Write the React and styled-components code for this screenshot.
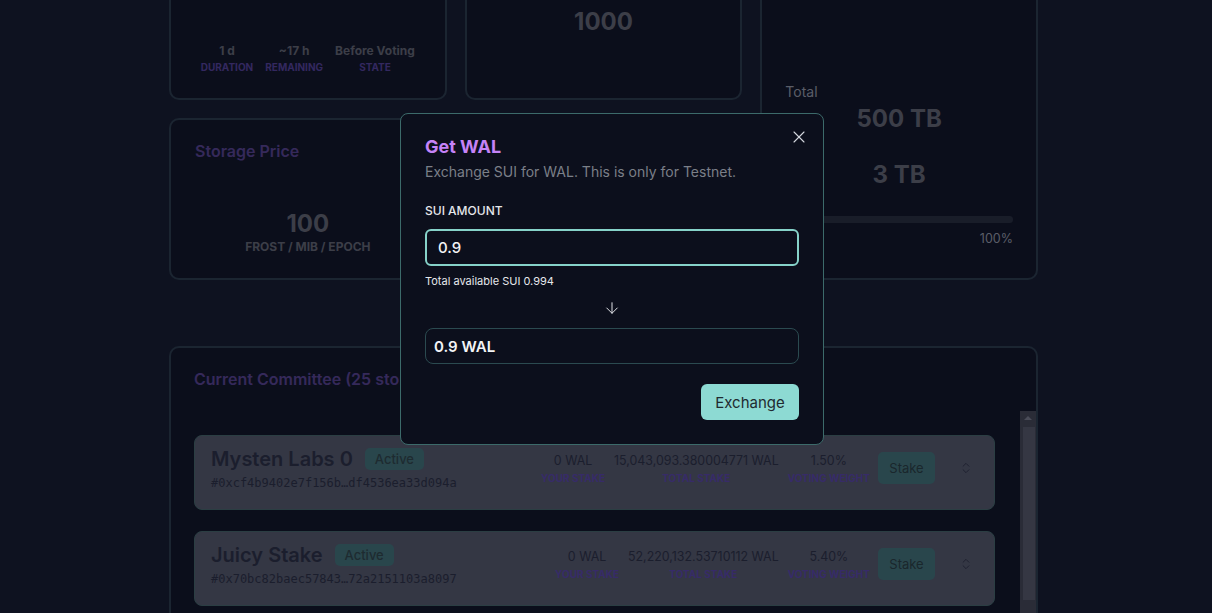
import React from 'react'
import styled, { createGlobalStyle } from 'styled-components'
import { X, ArrowDown, ChevronsUpDown } from 'lucide-react'

const GlobalStyle = createGlobalStyle`
  * { box-sizing: border-box; }
  body {
    margin: 0;
    background: #151b2e;
    font-family: Inter, "Noto Sans", sans-serif;
    overflow: hidden;
  }
`

const nodes = [
  {
    name: 'Mysten Labs 0',
    address: '#0xcf4b9402e7f156b…df4536ea33d094a',
    yourStake: '0 WAL',
    totalStake: '15,043,093.380004771 WAL',
    weight: '1.50%',
  },
  {
    name: 'Juicy Stake',
    address: '#0x70bc82baec57843…72a2151103a8097',
    yourStake: '0 WAL',
    totalStake: '52,220,132.53710112 WAL',
    weight: '5.40%',
  },
]

const App = () => {
  return (
    <>
      <GlobalStyle />
      <Page>
        <Content>
          <Grid>
            <Card $justify="flex-end">
              <EpochStats>
                <Stat>
                  <StatValue>1 d</StatValue>
                  <StatLabel>Duration</StatLabel>
                </Stat>
                <Stat>
                  <StatValue>~17 h</StatValue>
                  <StatLabel>Remaining</StatLabel>
                </Stat>
                <Stat>
                  <StatValue>Before Voting</StatValue>
                  <StatLabel>State</StatLabel>
                </Stat>
              </EpochStats>
            </Card>
            <Card $justify="center" $top="48px">
              <BigNumber>1000</BigNumber>
            </Card>
            <CapacityCard>
              <CapLabel>Total</CapLabel>
              <CapValue>500 TB</CapValue>
              <CapLabel $gap>Used</CapLabel>
              <CapValue>3 TB</CapValue>
              <Track>
                <Fill style={{ width: `${(3 / 500) * 100}%` }} />
              </Track>
              <Percent>100%</Percent>
            </CapacityCard>
            <Card $top="22px">
              <CardTitle>Storage Price</CardTitle>
              <Price>
                <BigNumber>100</BigNumber>
                <PriceUnit>FROST / MiB / EPOCH</PriceUnit>
              </Price>
            </Card>
            <Card />
          </Grid>

          <Committee>
            <CardTitle>Current Committee (25 storage nodes)</CardTitle>
            <ListFrame>
              <NodeList>
                {nodes.map((node) => (
                  <NodeRow key={node.address}>
                    <NodeInfo>
                      <NameLine>
                        <NodeName>{node.name}</NodeName>
                        <Badge>Active</Badge>
                      </NameLine>
                      <Address>{node.address}</Address>
                    </NodeInfo>
                    <NodeSide>
                      <NodeStats>
                        <Stat>
                          <RowValue>{node.yourStake}</RowValue>
                          <RowLabel>Your Stake</RowLabel>
                        </Stat>
                        <Stat>
                          <RowValue>{node.totalStake}</RowValue>
                          <RowLabel>Total Stake</RowLabel>
                        </Stat>
                        <Stat>
                          <RowValue>{node.weight}</RowValue>
                          <RowLabel>Voting Weight</RowLabel>
                        </Stat>
                      </NodeStats>
                      <StakeButton>Stake</StakeButton>
                      <Toggle>
                        <ChevronsUpDown size={14} strokeWidth={1.5} />
                      </Toggle>
                    </NodeSide>
                  </NodeRow>
                ))}
              </NodeList>
              <ScrollTrack>
                <ScrollButton />
                <ScrollThumb />
              </ScrollTrack>
            </ListFrame>
          </Committee>
        </Content>

        <Overlay>
          <Dialog>
            <Close>
              <X size={20} strokeWidth={1.3} />
            </Close>
            <DialogTitle>Get WAL</DialogTitle>
            <DialogText>Exchange SUI for WAL. This is only for Testnet.</DialogText>
            <FieldLabel>SUI AMOUNT</FieldLabel>
            <AmountInput defaultValue="0.9" />
            <Helper>Total available SUI 0.994</Helper>
            <ArrowRow>
              <ArrowDown size={18} strokeWidth={1.3} />
            </ArrowRow>
            <Output>0.9 WAL</Output>
            <Actions>
              <ExchangeButton>Exchange</ExchangeButton>
            </Actions>
          </Dialog>
        </Overlay>
      </Page>
    </>
  )
}

export default App

const Page = styled.div`
  height: 613px;
  overflow: hidden;
`

const Content = styled.div`
  width: 869px;
  margin-left: 169px;
`

const Grid = styled.div`
  display: grid;
  grid-template-columns: repeat(3, 1fr);
  grid-template-rows: 180px 162px;
  gap: 18px;
  margin-top: -80px;
`

const Card = styled.div`
  display: flex;
  flex-direction: column;
  justify-content: ${(p) => p.$justify || 'flex-start'};
  padding: ${(p) => p.$top || '24px'} 24px 24px;
  background: #111528;
  border: 2px solid #283547;
  border-radius: 10px;
`

const EpochStats = styled.div`
  display: flex;
  justify-content: center;
  gap: 12px;
`

const Stat = styled.div`
  display: flex;
  flex-direction: column;
  align-items: center;
  white-space: nowrap;
`

const StatValue = styled.div`
  font-size: 12px;
  font-weight: 700;
  line-height: 18px;
  color: #575a67;
`

const StatLabel = styled.div`
  font-size: 10px;
  font-weight: 700;
  line-height: 14px;
  text-transform: uppercase;
  color: #4a3a88;
`

const BigNumber = styled.div`
  font-size: 24px;
  font-weight: 700;
  line-height: 30px;
  color: #575a67;
  text-align: center;
`

const CapacityCard = styled(Card)`
  grid-row: span 2;
  justify-content: flex-end;
  padding: 24px 23px 31px;
`

const CapLabel = styled.div`
  font-size: 14px;
  line-height: 20px;
  color: #818595;
  margin-top: ${(p) => (p.$gap ? '4px' : '0')};
`

const CapValue = styled(BigNumber)`
  margin-top: 2px;
`

const Track = styled.div`
  height: 7px;
  margin-top: 26px;
  border-radius: 4px;
  background: #252a3b;
  overflow: hidden;
`

const Fill = styled.div`
  height: 100%;
  background: #3f6a72;
`

const Percent = styled.div`
  margin-top: 8px;
  font-size: 12.5px;
  line-height: 16px;
  text-align: right;
  color: #818595;
`

const CardTitle = styled.div`
  font-size: 16px;
  font-weight: 600;
  line-height: 18px;
  color: #4d3c82;
  white-space: nowrap;
`

const Price = styled.div`
  margin-top: auto;
  margin-bottom: -1px;
`

const PriceUnit = styled.div`
  font-size: 12px;
  font-weight: 700;
  line-height: 16px;
  text-align: center;
  text-transform: uppercase;
  color: #575a67;
`

const Committee = styled.div`
  margin-top: 66px;
  padding-top: 21px;
  background: #111528;
  border: 2px solid #283547;
  border-radius: 10px;

  ${CardTitle} {
    padding: 0 23px;
    line-height: 20px;
    margin-bottom: 22px;
  }
`

const ListFrame = styled.div`
  display: flex;
  height: 240px;
`

const NodeList = styled.div`
  flex: 1;
  display: flex;
  flex-direction: column;
  gap: 21px;
  overflow: hidden;
  padding: 24px 25px 24px 23px;
`

const ScrollTrack = styled.div`
  width: 16px;
  display: flex;
  flex-direction: column;
  align-items: center;
  background: #3d4050;
`

const ScrollButton = styled.div`
  flex-shrink: 0;
  width: 0;
  height: 0;
  margin: 5px 0 7px;
  border-left: 4px solid transparent;
  border-right: 4px solid transparent;
  border-bottom: 4px solid #6a6d7e;
`

const ScrollThumb = styled.div`
  flex-shrink: 0;
  width: 12px;
  height: 173px;
  margin-left: 2px;
  background: #4c4f60;
`

const NodeRow = styled.div`
  flex-shrink: 0;
  display: flex;
  align-items: center;
  justify-content: space-between;
  padding: 9px 16px 18px;
  background: #4b4f62;
  border: 1px solid #3e5a61;
  border-radius: 8px;
`

const NodeInfo = styled.div`
  display: flex;
  flex-direction: column;
`

const NameLine = styled.div`
  display: flex;
  align-items: center;
  gap: 12px;
`

const NodeName = styled.div`
  font-size: 20px;
  font-weight: 600;
  line-height: 28px;
  color: #282c41;
`

const Badge = styled.span`
  height: 22px;
  padding: 0 10px;
  border-radius: 5px;
  background: #3c656e;
  color: #2b3e46;
  font-size: 13px;
  font-weight: 500;
  line-height: 22px;
`

const Address = styled.div`
  margin-top: 2px;
  font-family: "DejaVu Sans Mono", "Liberation Mono", monospace;
  font-size: 12px;
  line-height: 16px;
  color: #282c41;
`

const NodeSide = styled.div`
  display: flex;
  align-items: center;
`

const NodeStats = styled.div`
  display: flex;
  gap: 9px;
`

const RowValue = styled.div`
  font-size: 12.4px;
  line-height: 17px;
  color: #282c41;
`

const RowLabel = styled.div`
  margin-top: 3px;
  font-size: 10px;
  font-weight: 700;
  line-height: 13px;
  text-transform: uppercase;
  color: #4f3e96;
`

const StakeButton = styled.button`
  margin-left: 8px;
  width: 57px;
  height: 32px;
  border: 0;
  border-radius: 5px;
  background: #3c656e;
  color: #263840;
  font-family: inherit;
  font-size: 13px;
`

const Toggle = styled.button`
  margin-left: 19px;
  width: 24px;
  height: 24px;
  display: flex;
  align-items: center;
  justify-content: center;
  padding: 0;
  border: 0;
  background: transparent;
  color: #282c41;
`

const Overlay = styled.div`
  position: fixed;
  inset: 0;
  display: flex;
  justify-content: center;
  align-items: flex-start;
  padding: 113px 0 0 12px;
  background: rgba(0, 0, 0, 0.3);
`

const Dialog = styled.div`
  position: relative;
  width: 424px;
  padding: 24px;
  background: #0c0f1c;
  border: 1px solid #3c6a6a;
  border-radius: 8px;
`

const Close = styled.button`
  position: absolute;
  top: 13px;
  right: 14px;
  display: flex;
  padding: 0;
  border: 0;
  background: transparent;
  color: #d4d7de;
`

const DialogTitle = styled.h2`
  margin: 0;
  font-size: 18px;
  font-weight: 700;
  line-height: 18px;
  color: #c583f7;
`

const DialogText = styled.p`
  margin: 6px 0 0;
  font-size: 14px;
  line-height: 20px;
  color: #7b7f88;
`

const FieldLabel = styled.div`
  margin-top: 21px;
  font-size: 12px;
  font-weight: 500;
  line-height: 16px;
  color: #e5e7eb;
`

const AmountInput = styled.input`
  display: block;
  width: 100%;
  height: 37px;
  margin-top: 10px;
  padding: 0 11px;
  background: transparent;
  border: 2px solid #86d2c9;
  border-radius: 6px;
  outline: none;
  color: #f3f4f6;
  font-family: inherit;
  font-size: 15px;
  font-weight: 500;
`

const Helper = styled.div`
  margin-top: 8px;
  font-size: 11px;
  line-height: 14px;
  color: #e5e7eb;
`

const ArrowRow = styled.div`
  display: flex;
  justify-content: center;
  height: 18px;
  margin-top: 11px;
  color: #e5e7eb;
`

const Output = styled.div`
  display: flex;
  align-items: center;
  height: 36px;
  margin-top: 11px;
  padding: 0 8px;
  border: 1px solid #2b4a50;
  border-radius: 8px;
  color: #f3f4f6;
  font-size: 15px;
  font-weight: 600;
`

const Actions = styled.div`
  display: flex;
  justify-content: flex-end;
  margin-top: 20px;
`

const ExchangeButton = styled.button`
  width: 98px;
  height: 36px;
  border: 0;
  border-radius: 6px;
  background: #8ddad3;
  color: #1f2a30;
  font-family: inherit;
  font-size: 15px;
`
